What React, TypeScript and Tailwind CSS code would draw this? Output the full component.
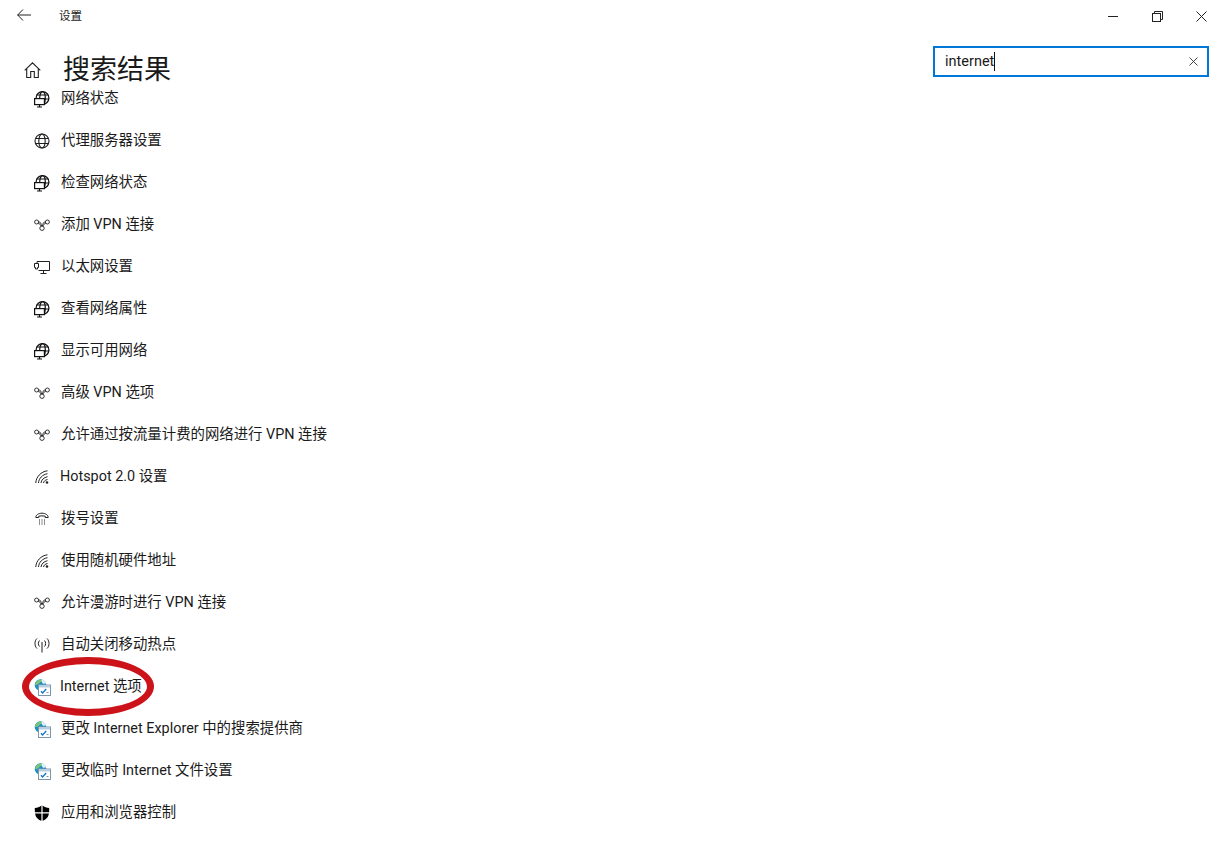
import type { ReactNode } from 'react';

const GlobeMonitor = () => (
  <svg width="16" height="17" viewBox="0 0 16 17" fill="none" stroke="#111" strokeWidth="1.200">
    <circle cx="8.500" cy="7" r="6.400" />
    <ellipse cx="8.500" cy="7" rx="2.800" ry="6.400" />
    <path d="M2.500 4h12M2.200 8h13" />
    <rect x=".6" y="7.600" width="9.800" height="6" fill="#fff" />
    <path d="M5.500 13.600v2.400M3 16h5" />
  </svg>
);

const Globe = () => (
  <svg width="16" height="16" viewBox="0 0 16 16" fill="none" stroke="#1f1f1f" strokeWidth="1.100">
    <circle cx="8" cy="8" r="7" />
    <ellipse cx="8" cy="8" rx="3.200" ry="7" />
    <path d="M1.500 5.500h13M1.500 10.500h13" />
  </svg>
);

const Vpn = () => (
  <svg width="16" height="12" viewBox="0 0 16 12" fill="none" stroke="#333" strokeWidth="1">
    <circle cx="2.600" cy="3" r="2" />
    <circle cx="13.400" cy="3" r="2" />
    <circle cx="8" cy="9.200" r="2.200" />
    <path d="M4.600 2.800c2 0 2.500 1.800 3 4.200M11.400 2.800c-2 0-2.500 1.800-3 4.200M4.200 4.400c1.500.2 2.300 1.200 2.800 3M11.800 4.400c-1.500.2-2.300 1.200-2.800 3" />
  </svg>
);

const Ethernet = () => (
  <svg width="16" height="15" viewBox="0 0 16 15" fill="none" stroke="#1f1f1f" strokeWidth="1">
    <path d="M3 3V1.500h12.500v9h-11" />
    <path d="M.5 3.500h4v4h-1v1.500h-2V7.500h-1z" fill="#fff" />
    <path d="M9.500 10.500v3M6.500 13.500h6" />
  </svg>
);

const Wifi = () => (
  <svg width="14" height="14" viewBox="0 0 14 14" fill="none" stroke="#222" strokeWidth="1">
    <path d="M.8 13C1 7 6 1.500 12.500.8M3.500 13c.2-4.500 4-8.500 9-9.300M6 13c.2-3 2.800-5.500 6.500-6.300M8.500 13c.2-1.500 1.500-3 4-3.500" />
    <circle cx="12" cy="12.500" r="1.300" fill="#222" stroke="none" />
  </svg>
);

const Dialup = () => (
  <svg width="14" height="14" viewBox="0 0 14 14" fill="none" stroke="#1f1f1f" strokeWidth="1">
    <path d="M.8 5.500C.8 3 3.500 1.200 7 1.200s6.200 1.800 6.200 4.300h-3V4.200C9 3.800 5 3.800 3.800 4.200v1.300z" />
    <path d="M4 8h1M6.500 8h1M9 8h1M4 10h1M6.500 10h1M9 10h1M4 12h1M6.500 12h1M9 12h1" />
  </svg>
);

const Hotspot = () => (
  <svg width="16" height="16" viewBox="0 0 16 16" fill="none" stroke="#1f1f1f" strokeWidth="1">
    <path d="M8 5v10.500" />
    <path d="M5.500 3.500C4 5 4 8 5.500 9.500M10.500 3.500C12 5 12 8 10.500 9.500" />
    <path d="M3 1.500C.3 4 .3 9 3 11.500M13 1.500c2.700 2.500 2.700 7.500 0 10" />
  </svg>
);

const InternetOptions = () => (
  <svg width="17" height="17" viewBox="0 0 17 17">
    <circle cx="6.500" cy="6" r="5.800" fill="#1f8fc4" />
    <path d="M3 2C4.500.8 7 .4 8.500 1.300 8 2.800 6 3.200 5 4.500 4 5.500 2.500 6 1 6 1 4.500 2 3 3 2z" fill="#7cc576" />
    <path d="M7.500.4c2.200.3 4 1.800 4.700 4L9 4.800C8 3.600 7.500 2.100 7.500.4z" fill="#e4f1f8" />
    <rect x="4.500" y="6" width="12" height="10.500" fill="#fff" stroke="#7f97ab" />
    <rect x="5" y="6.500" width="11" height="2" fill="#b5cfe3" />
    <path d="M7 12.200l1.600 1.800L12.200 10" fill="none" stroke="#1478c8" strokeWidth="1.400" />
    <path d="M12.500 13.500h2" stroke="#7f97ab" />
  </svg>
);

const Shield = () => (
  <svg width="16" height="16" viewBox="0 0 16 16" fill="#000">
    <path d="M7.400.4C5.800 1.900 3.300 2.700.8 2.900c0 1 0 2.500.1 4.300h6.500zM8.600.4v6.800h6.500c.1-1.800.1-3.300.1-4.300-2.500-.2-5-1-6.600-2.500zM1.100 8.400c.4 2.900 2.100 5.800 6.300 7.300V8.400zM8.600 8.400v7.300c4.200-1.500 5.900-4.400 6.300-7.300z" />
  </svg>
);

const rows: { icon: ReactNode; label: string; latin?: boolean }[] = [
  { icon: <GlobeMonitor />, label: '网络状态' },
  { icon: <Globe />, label: '代理服务器设置' },
  { icon: <GlobeMonitor />, label: '检查网络状态' },
  { icon: <Vpn />, label: '添加 VPN 连接' },
  { icon: <Ethernet />, label: '以太网设置' },
  { icon: <GlobeMonitor />, label: '查看网络属性' },
  { icon: <GlobeMonitor />, label: '显示可用网络' },
  { icon: <Vpn />, label: '高级 VPN 选项' },
  { icon: <Vpn />, label: '允许通过按流量计费的网络进行 VPN 连接' },
  { icon: <Wifi />, label: 'Hotspot 2.0 设置', latin: true },
  { icon: <Dialup />, label: '拨号设置' },
  { icon: <Wifi />, label: '使用随机硬件地址' },
  { icon: <Vpn />, label: '允许漫游时进行 VPN 连接' },
  { icon: <Hotspot />, label: '自动关闭移动热点' },
  { icon: <InternetOptions />, label: 'Internet 选项', latin: true },
  { icon: <InternetOptions />, label: '更改 Internet Explorer 中的搜索提供商' },
  { icon: <InternetOptions />, label: '更改临时 Internet 文件设置' },
  { icon: <Shield />, label: '应用和浏览器控制' },
];

export default function App() {
  return (
    <div className="relative h-[847px] w-[1224px] overflow-hidden bg-white font-['Roboto','Noto_Sans_CJK_SC',sans-serif] text-[#1a1a1a]">
      {/* title bar */}
      <div className="flex h-[32px] items-center">
        <div className="-mt-[2px] flex w-[59px] justify-start pl-[17px]">
          <svg width="14" height="12" viewBox="0 0 14 12" fill="none" stroke="#222" strokeWidth="1">
            <path d="M.5 6H14M6 .5.700 6 6 11.500" />
          </svg>
        </div>
        <span className="mt-px text-[11.500px]">设置</span>
        <div className="ml-auto flex items-center">
          <div className="flex w-[45px] justify-center">
            <div className="h-px w-[10px] bg-[#222]" />
          </div>
          <div className="flex w-[45px] justify-center">
            <svg width="11" height="11" viewBox="0 0 11 11" fill="none" stroke="#222" strokeWidth="1">
              <rect x=".5" y="2.500" width="8" height="8" />
              <path d="M2.500 2.500V.5h8v8h-2" />
            </svg>
          </div>
          <div className="flex w-[44px] justify-center pr-[1px]">
            <svg width="11" height="11" viewBox="0 0 11 11" fill="none" stroke="#222" strokeWidth="1">
              <path d="M.5.500l10 10M10.500.500l-10 10" />
            </svg>
          </div>
        </div>
      </div>

      {/* header */}
      <div className="flex h-[58px] items-start">
        <div className="ml-[24px] mt-[30px] w-[40px]">
          <svg width="17" height="16" viewBox="0 0 17 16" fill="none" stroke="#222" strokeWidth="1.100">
            <path d="M.7 8.300 8.500.8l7.800 7.500M2.700 6.700V15.500h4V9.500h3.600v6h4V6.700" />
          </svg>
        </div>
        <h1 className="-ml-px mt-[18px] text-[27px] leading-[40px] font-normal">搜索结果</h1>
        <div className="ml-auto mr-[15px] mt-[14px] flex h-[31px] w-[276px] items-center border-2 border-[#0078d7] pl-[10px] pr-[9px] text-[14.500px]">
          <span>internet</span>
          <span className="h-[19px] w-px bg-[#111]" />
          <svg className="ml-auto" width="9" height="9" viewBox="0 0 9 9" fill="none" stroke="#444" strokeWidth="1">
            <path d="M.5.500l8 8M8.500.500l-8 8" />
          </svg>
        </div>
      </div>

      {/* results, scrolled so the first row is cut off */}
      <div className="h-[757px] overflow-hidden">
        <ul className="-mt-[12px]">
          {rows.map(row => (
            <li key={row.label} className="flex h-[42px] items-center">
              <div className="flex w-[60px] justify-center pl-[24px]">{row.icon}</div>
              <span className={row.latin ? 'text-[14.400px]' : 'ml-px text-[14.400px]'}>{row.label}</span>
            </li>
          ))}
        </ul>
      </div>

      {/* red annotation ring around the Internet options row */}
      <div className="absolute left-[22px] top-[657px] h-[59px] w-[132px] rounded-[50%] border-[7px] border-[#cc1319]" />
    </div>
  );
}
